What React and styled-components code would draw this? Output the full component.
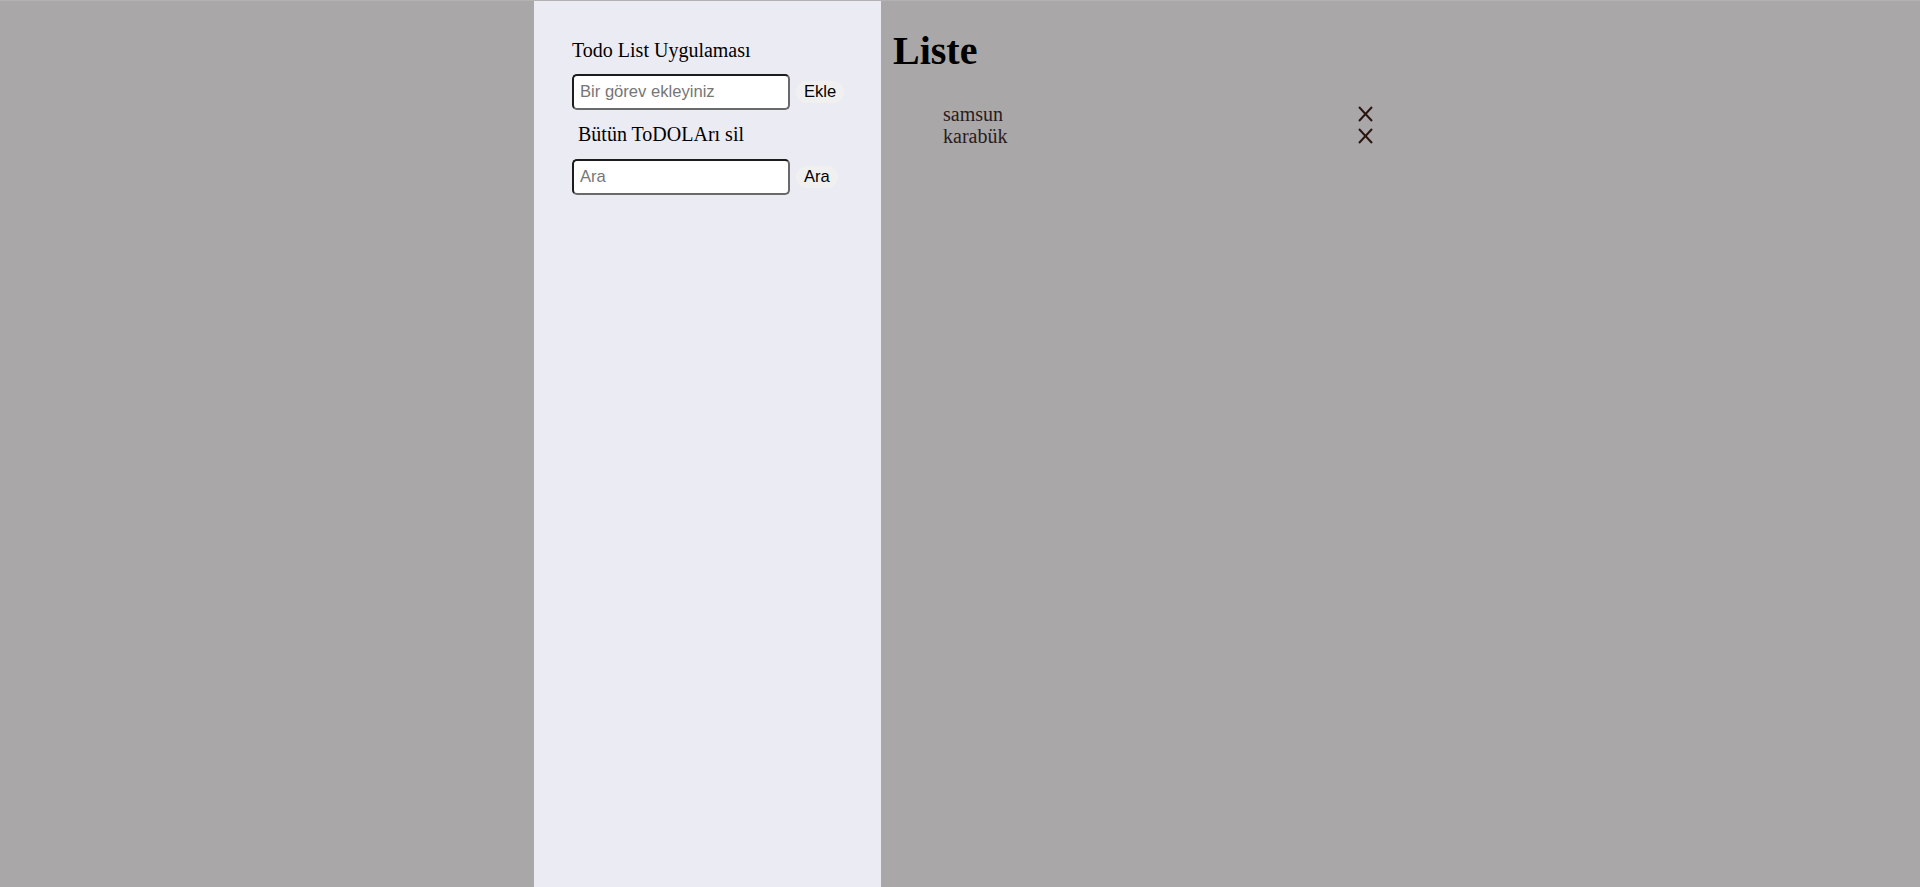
import React from "react";
import styled, { createGlobalStyle } from "styled-components";

const Global = createGlobalStyle`
  html, body { margin: 0; padding: 0; background: #a9a7a8; }
  body { font-family: "Liberation Serif", "Times New Roman", serif; }
  #root { min-height: 887px; }
`;

const Page = styled.div`
  display: flex;
  min-height: 887px;
  border-top: 1px solid #b3b1b2;
  box-sizing: border-box;
  padding-left: 534px;
`;

const Sidebar = styled.aside`
  width: 347px;
  background: #ebebf3;
  box-sizing: border-box;
  padding: 38px 38px;
  display: flex;
  flex-direction: column;
`;

const Title = styled.div`
  font-size: 20px;
  color: #000;
  line-height: 23px;
  margin-bottom: 12px;
`;

const Row = styled.div`
  display: flex;
  align-items: center;
  gap: 6px;
`;

const Input = styled.input`
  width: 218px;
  height: 36px;
  box-sizing: border-box;
  border: 2px solid;
  border-color: #1c1c1c #6a6a6a #6a6a6a #1c1c1c;
  border-radius: 5px;
  padding: 0 6px;
  font-family: "Liberation Sans", Arial, sans-serif;
  font-size: 16.6px;
  background: #fff;
  outline: none;
  &::placeholder { color: #767676; }
`;

const PillButton = styled.button`
  font-family: "Liberation Sans", Arial, sans-serif;
  font-size: 16.6px;
  color: #000;
  background: #f1f0f1;
  border: none;
  border-radius: 11px;
  padding: 2px 8px;
  line-height: 18px;
  cursor: pointer;
`;

const ClearButton = styled.button`
  align-self: flex-start;
  font-family: "Liberation Serif", "Times New Roman", serif;
  font-size: 20px;
  color: #000;
  background: transparent;
  border: none;
  padding: 0 6px;
  margin: 13px 0 13px;
  line-height: 23px;
  cursor: pointer;
`;

const Main = styled.main`
  padding: 0 12px;
  flex: 1;
`;

const Heading = styled.h1`
  font-size: 40px;
  font-weight: bold;
  margin: 27px 0 0;
  line-height: 46px;
  color: #000;
`;

const List = styled.ul`
  list-style: none;
  margin: 29px 0 0;
  padding: 0 0 0 50px;
  width: 430px;
`;

const Item = styled.li`
  display: flex;
  justify-content: space-between;
  align-items: center;
  font-size: 20px;
  line-height: 23px;
  color: #2a1c20;
  height: 22px;
`;

const RemoveIcon = () => (
  <svg width="15" height="16" viewBox="0 0 15 16" fill="none" stroke="#2a1410" strokeWidth="2">
    <line x1="1" y1="1" x2="14" y2="15" />
    <line x1="14" y1="1" x2="1" y2="15" />
  </svg>
);

const todos = ["samsun", "karabük"];

export default function App() {
  return (
    <>
      <Global />
      <Page>
        <Sidebar>
          <Title>Todo List Uygulaması</Title>
          <Row>
            <Input placeholder="Bir görev ekleyiniz" />
            <PillButton>Ekle</PillButton>
          </Row>
          <ClearButton>Bütün ToDOLArı sil</ClearButton>
          <Row>
            <Input placeholder="Ara" />
            <PillButton>Ara</PillButton>
          </Row>
        </Sidebar>
        <Main>
          <Heading>Liste</Heading>
          <List>
            {todos.map((t) => (
              <Item key={t}>
                <span>{t}</span>
                <RemoveIcon />
              </Item>
            ))}
          </List>
        </Main>
      </Page>
    </>
  );
}
